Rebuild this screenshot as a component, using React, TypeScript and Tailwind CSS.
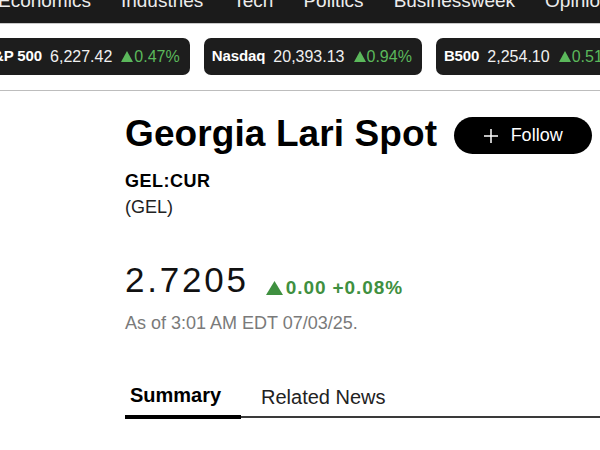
import React from "react";

const font = { fontFamily: '"Liberation Sans", Arial, Helvetica, sans-serif' };

function Tri({ className }: { className?: string }) {
  return (
    <svg viewBox="0 0 12 11" preserveAspectRatio="none" className={className} aria-hidden="true">
      <path d="M6 0 L12 11 L0 11 Z" fill="currentColor" />
    </svg>
  );
}

function Chip({ name, value, change }: { name: string; value: string; change?: string }) {
  return (
    <div className="flex h-[37px] shrink-0 items-center rounded-[7px] bg-[#1d1d1d] pl-[8px] pr-[10px] text-[16px] text-white">
      <span className="text-[15px] font-bold tracking-[-0.1px]">{name}</span>
      <span className="ml-[8px] text-[#f0f0f0]">{value}</span>
      {change && (
        <span className="ml-[9px] flex items-center text-[#5bb85b]">
          <Tri className="h-[11px] w-[12px]" />
          <span className="ml-[1px]">{change}</span>
        </span>
      )}
    </div>
  );
}

export default function App() {
  return (
    <div className="h-[450px] w-[600px] overflow-hidden bg-white text-black" style={font}>
      {/* top nav */}
      <div className="h-[23px] overflow-hidden bg-[#1b1b1b]">
        <div className="-ml-[2px] -mt-[9px] flex gap-[30px] whitespace-nowrap text-[19px] leading-[19px] text-[#ececec]">
          <span>Economics</span>
          <span>Industries</span>
          <span>Tech</span>
          <span>Politics</span>
          <span>Businessweek</span>
          <span>Opinion</span>
        </div>
      </div>
      <div className="h-[1px] bg-[#c9c9c9]" />

      {/* tickers */}
      <div className="mt-[14px] flex gap-[14px] overflow-hidden">
        <div className="-ml-[25px] flex gap-[14px]">
          <Chip name="S&P 500" value="6,227.42" change="0.47%" />
          <Chip name="Nasdaq" value="20,393.13" change="0.94%" />
          <Chip name="B500" value="2,254.10" change="0.51%" />
        </div>
      </div>
      <div className="mt-[15px] h-[1px] bg-[#bdbdbd]" />

      {/* content */}
      <div className="pl-[125px]">
        <div className="mt-[24px] flex items-start">
          <h1 className="text-[37px] font-bold leading-[37px] tracking-[0.1px]">Georgia Lari Spot</h1>
          <button className="ml-[17px] mt-[2px] flex h-[37px] w-[138px] items-center justify-center gap-[13px] rounded-full bg-black text-[18px] text-white">
            <svg viewBox="0 0 14 14" className="h-[14px] w-[14px]" aria-hidden="true">
              <path d="M7 0 V14 M0 7 H14" stroke="currentColor" strokeWidth="1.5" />
            </svg>
            <span>Follow</span>
          </button>
        </div>

        <div className="mt-[14px] text-[18px] font-bold leading-[26px] tracking-[0.5px]">GEL:CUR</div>
        <div className="text-[18px] leading-[26px] text-[#222]">(GEL)</div>

        <div className="mt-[42px] flex items-baseline">
          <span className="text-[35px] font-normal leading-[35px] tracking-[2.8px] text-[#111]">2.7205</span>
          <span className="relative top-[2px] ml-[17px] flex items-baseline text-[19px] font-bold tracking-[0.9px] text-[#3f9040]">
            <Tri className="mr-[3px] h-[14px] w-[17px] self-center" />
            <span>0.00 +0.08%</span>
          </span>
        </div>

        <div className="mt-[10px] text-[18px] leading-[24px] text-[#7a7a7a]">As of 3:01 AM EDT 07/03/25.</div>

        <div className="mt-[48px] flex items-end">
          <div className="w-[116px] border-b-[4px] border-black pb-[8px] pl-[5px] text-[20px] font-bold leading-[24px]">
            Summary
          </div>
          <div className="mb-[1px] flex-1 border-b-[2px] border-[#3a3a3a] pb-[7px] pl-[20px] text-[20px] leading-[24px] text-[#222]">
            Related News
          </div>
        </div>
      </div>
    </div>
  );
}
